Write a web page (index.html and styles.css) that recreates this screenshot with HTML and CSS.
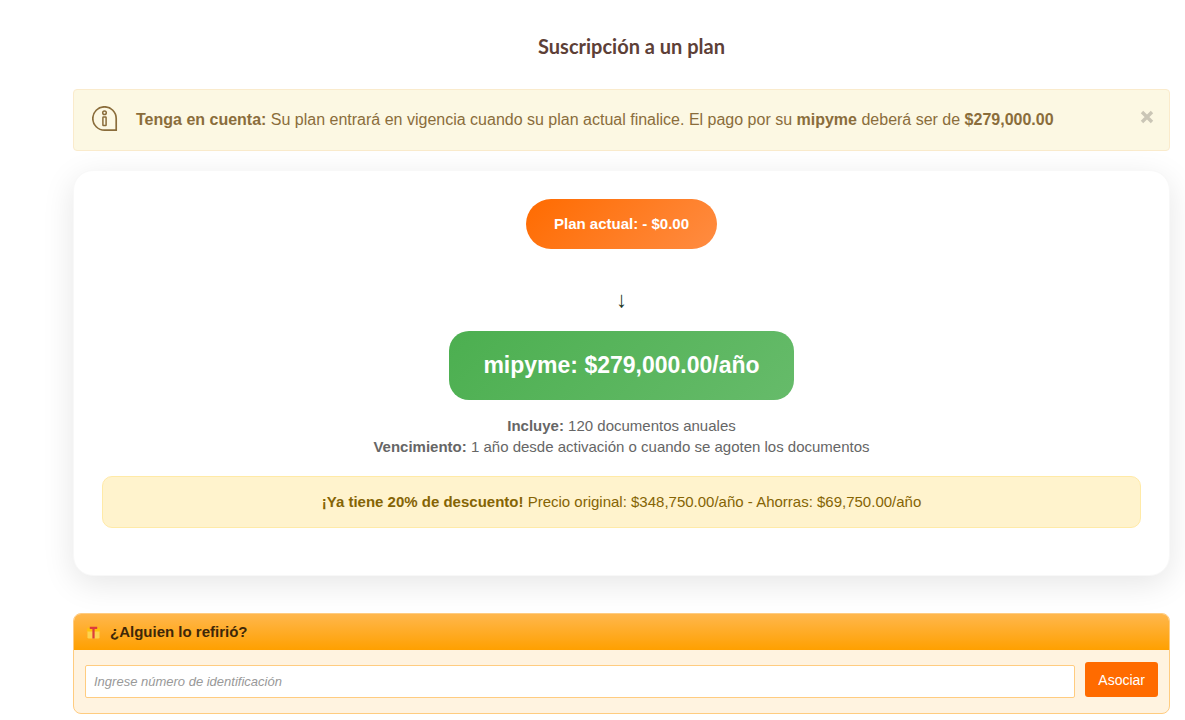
FILE: index.html
```html
<!DOCTYPE html>
<html lang="es">
<head>
<meta charset="utf-8">
<meta name="viewport" content="width=device-width, initial-scale=1">
<title>Suscripción a un plan</title>
<link rel="stylesheet" href="styles.css">
</head>
<body>
<main class="page">
  <h1 class="title">Suscripción a un plan</h1>

  <div class="notice" role="alert">
    <svg class="notice-icon" viewBox="0 0 26 26" fill="none" stroke="currentColor" stroke-width="1.7" aria-hidden="true">
      <path d="M24.2 24.2H12.5A11.7 11.7 0 1 1 24.2 12.5z"/>
      <circle cx="12.5" cy="6.8" r="1.8" stroke-width="1.5"/>
      <rect x="10.9" y="11" width="3.2" height="8.6" rx="0.5" stroke-width="1.5"/>
    </svg>
    <p class="notice-text"><strong>Tenga en cuenta:</strong> Su plan entrará en vigencia cuando su plan actual finalice. El pago por su <strong>mipyme</strong> deberá ser de <strong>$279,000.00</strong></p>
    <button class="close" type="button" aria-label="Cerrar"><svg viewBox="0 0 14 14" aria-hidden="true"><path d="M2 2l10 10M12 2L2 12" stroke="currentColor" stroke-width="3.4"/></svg></button>
  </div>

  <section class="card">
    <div class="current">Plan actual: - $0.00</div>
    <div class="arrow">↓</div>
    <div class="plan">mipyme: $279,000.00/año</div>
    <p class="details"><strong>Incluye:</strong> 120 documentos anuales<br><strong>Vencimiento:</strong> 1 año desde activación o cuando se agoten los documentos</p>
    <p class="discount"><strong>¡Ya tiene 20% de descuento!</strong> Precio original: $348,750.00/año - Ahorras: $69,750.00/año</p>
  </section>

  <section class="referral">
    <h2 class="referral-head">
      <svg class="gift" viewBox="0 0 14 13" aria-hidden="true">
        <rect x="0.5" y="4" width="13" height="9" rx="1.5" fill="#fdd34f"/>
        <rect x="0" y="1.5" width="14" height="4" rx="1" fill="#ffc10d"/>
        <path d="M5.8 2h2.4v11H5.8z" fill="#dd3c3c"/>
        <path d="M3 .4h8v2.2H3z" fill="#dd3c3c"/>
      </svg>
      <label for="ident">¿Alguien lo refirió?</label>
    </h2>
    <form class="referral-form">
      <input class="ident" id="ident" type="text" placeholder="Ingrese número de identificación">
      <button class="submit" type="button">Asociar</button>
    </form>
  </section>
</main>
</body>
</html>
```
FILE: styles.css
```css
* {
  box-sizing: border-box;
}

body {
  margin: 0;
  background: #fff;
  color: #333;
  font: 15px/21px "Liberation Sans", Arial, sans-serif;
}

.page {
  padding: 34px 15px 6px 73px;
}

.title {
  margin: 0 0 31px;
  padding-left: 20px;
  color: #5d4037;
  font: 700 20px/24px Lato, sans-serif;
  text-align: center;
}

.notice {
  display: flex;
  align-items: center;
  min-height: 62px;
  margin-bottom: 19px;
  padding: 15px 15px 17px 18px;
  border: 1px solid #faebcc;
  border-radius: 4px;
  background: #fcf8e3;
  color: #8a6d3b;
  font-size: 16px;
}

.notice-icon {
  flex: none;
  width: 26px;
  height: 26px;
  margin-right: 18px;
}

.notice-text {
  flex: 1;
  margin: 0;
}

.close {
  align-self: flex-start;
  width: 14px;
  height: 20px;
  padding: 4px 0 0;
  border: 0;
  background: none;
  color: #cac6b6;
}

.close svg {
  display: block;
  width: 14px;
  height: 14px;
}

.card {
  display: flex;
  flex-direction: column;
  align-items: center;
  margin-bottom: 37px;
  padding: 28px 28px 47px;
  border: 1px solid #f8f8f8;
  border-radius: 20px;
  background: #fff;
  box-shadow: 0 8px 32px rgba(0, 0, 0, 0.1);
  text-align: center;
}

.current {
  padding: 14px 28px;
  border-radius: 25px;
  background: linear-gradient(135deg, #ff6b00, #ff8c42);
  color: #fff;
  font-weight: bold;
  line-height: 22px;
}

.arrow {
  margin: 36px 0 16px;
  color: #1b3a1f;
  font-size: 22px;
  line-height: 30px;
}

.plan {
  padding: 18px 34px;
  border-radius: 20px;
  background: linear-gradient(135deg, #4caf50, #66bb6a);
  color: #fff;
  font-size: 23px;
  font-weight: bold;
  line-height: 33px;
}

.details {
  margin: 15px 0 19px;
  color: #666;
}

.discount {
  align-self: stretch;
  margin: 0;
  padding: 15px;
  border: 1px solid #ffeaa7;
  border-radius: 10px;
  background: #fff3cd;
  color: #856404;
  line-height: 20px;
}

.referral {
  overflow: hidden;
  position: relative;
  border: 1px solid #ffcc80;
  border-radius: 8px;
  background: #fff3e0;
}

.referral-head {
  display: flex;
  align-items: center;
  gap: 10px;
  margin: 0;
  padding: 8px 13px;
  background: linear-gradient(#ffb74d, #ffa000);
  color: #3e2708;
  font-size: 15px;
  line-height: 20px;
}

.gift {
  width: 13px;
  height: 13px;
}

.referral-form {
  display: flex;
  align-items: flex-start;
  gap: 10px;
  padding: 12px 11px 15px;
}

.ident {
  flex: 1;
  min-width: 0;
  height: 33px;
  margin-top: 3px;
  padding: 0 8px;
  border: 1px solid #ffcc80;
  border-radius: 2px;
  background: #fff;
  font: 13px "Liberation Sans", Arial, sans-serif;
}

.ident::placeholder {
  color: #999;
  font-style: italic;
}

.submit {
  height: 35px;
  padding: 0 13px;
  border: 0;
  border-radius: 3px;
  background: #ff6b00;
  color: #fff;
  font: 14px "Liberation Sans", Arial, sans-serif;
}
```
